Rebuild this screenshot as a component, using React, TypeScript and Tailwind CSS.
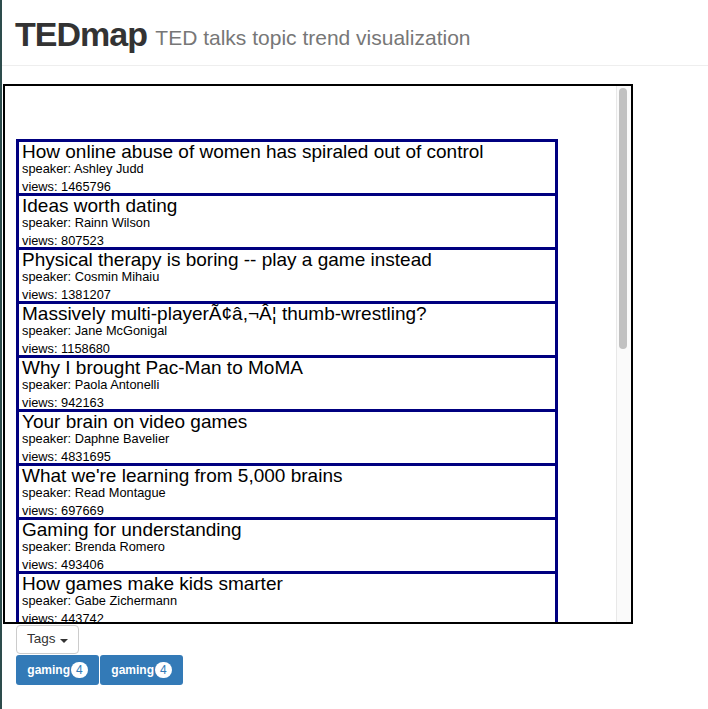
import React from 'react'

type Talk = { title: string; speaker: string; views: number }

const talks: Talk[] = [
    { title: 'How online abuse of women has spiraled out of control', speaker: 'Ashley Judd', views: 1465796 },
    { title: 'Ideas worth dating', speaker: 'Rainn Wilson', views: 807523 },
    { title: 'Physical therapy is boring -- play a game instead', speaker: 'Cosmin Mihaiu', views: 1381207 },
    { title: 'Massively multi-playerÃ¢â,¬Â¦ thumb-wrestling?', speaker: 'Jane McGonigal', views: 1158680 },
    { title: 'Why I brought Pac-Man to MoMA', speaker: 'Paola Antonelli', views: 942163 },
    { title: 'Your brain on video games', speaker: 'Daphne Bavelier', views: 4831695 },
    { title: "What we're learning from 5,000 brains", speaker: 'Read Montague', views: 697669 },
    { title: 'Gaming for understanding', speaker: 'Brenda Romero', views: 493406 },
    { title: 'How games make kids smarter', speaker: 'Gabe Zichermann', views: 443742 },
    { title: 'The game that can give you 10 extra years of life', speaker: 'Jane McGonigal', views: 5128384 },
    { title: 'The game layer on top of the world', speaker: 'Seth Priebatsch', views: 1213875 },
]

const TalkItem = ({ talk }: { talk: Talk }) => (
    <div className="border-x-[3px] border-t-[3px] border-[#000080] px-[3px] h-[54px]">
        <div className="text-[19px] leading-[20px] text-black whitespace-nowrap">{talk.title}</div>
        <div className="text-[12.8px] leading-[14px] text-black">speaker: {talk.speaker}</div>
        <div className="text-[12.8px] leading-[14px] text-black mt-[4px]">views: {talk.views}</div>
    </div>
)

const App = () => {
    return (
        <div className="flex min-h-[709px] w-full bg-white font-['Liberation_Sans',Arial,sans-serif]">
            <div className="w-[2px] shrink-0 bg-[#2d4c4c]" />
            <div className="flex-1">
                {/* header */}
                <div className="border-b border-[#eee] h-[66px] pt-[14px] pl-[13px]">
                    <h1 className="text-[34px] leading-[40px] font-bold tracking-[-1px] text-[#333] whitespace-nowrap">
                        TEDmap <span className="relative -top-[1px] text-[21px] leading-none font-normal tracking-normal text-[#777]">TED talks topic trend visualization</span>
                    </h1>
                </div>

                <div className="mt-[18px] ml-[1px] w-[630px] h-[540px] border-2 border-black bg-white flex">
                    <div className="flex-1 h-full overflow-hidden">
                        <div className="pt-[53px] pl-[11px] w-[553px]">
                            {talks.map((t, i) => (
                                <TalkItem key={i} talk={t} />
                            ))}
                        </div>
                    </div>
                    {/* scrollbar */}
                    <div className="w-[15px] h-full bg-[#fafafa] border-l border-[#e8e8e8]">
                        <div className="mt-[2px] ml-[2px] w-[8px] h-[261px] rounded-full bg-[#c1c1c1]" />
                    </div>
                </div>

                <div className="ml-[14px] mt-[1px]">
                    <button className="h-[29px] px-[10px] rounded-[4px] border border-[#ccc] bg-white text-[13.5px] text-[#333] flex items-center gap-[4px]">
                        Tags
                        <span className="inline-block w-0 h-0 border-x-[4px] border-x-transparent border-t-[4px] border-t-[#333] mt-[2px]" />
                    </button>
                    <div className="flex gap-[1px] mt-[1px]">
                        {[0, 1].map((i) => (
                            <button key={i} className="h-[30px] w-[83px] rounded-[3px] bg-[#337ab7] text-white text-[12px] font-bold flex items-center justify-center">
                                gaming
                                <span className="ml-[1px] rounded-full bg-white text-[#337ab7] text-[12px] font-normal leading-[16px] px-[5px]">4</span>
                            </button>
                        ))}
                    </div>
                </div>
            </div>
        </div>
    )
}

export default App
